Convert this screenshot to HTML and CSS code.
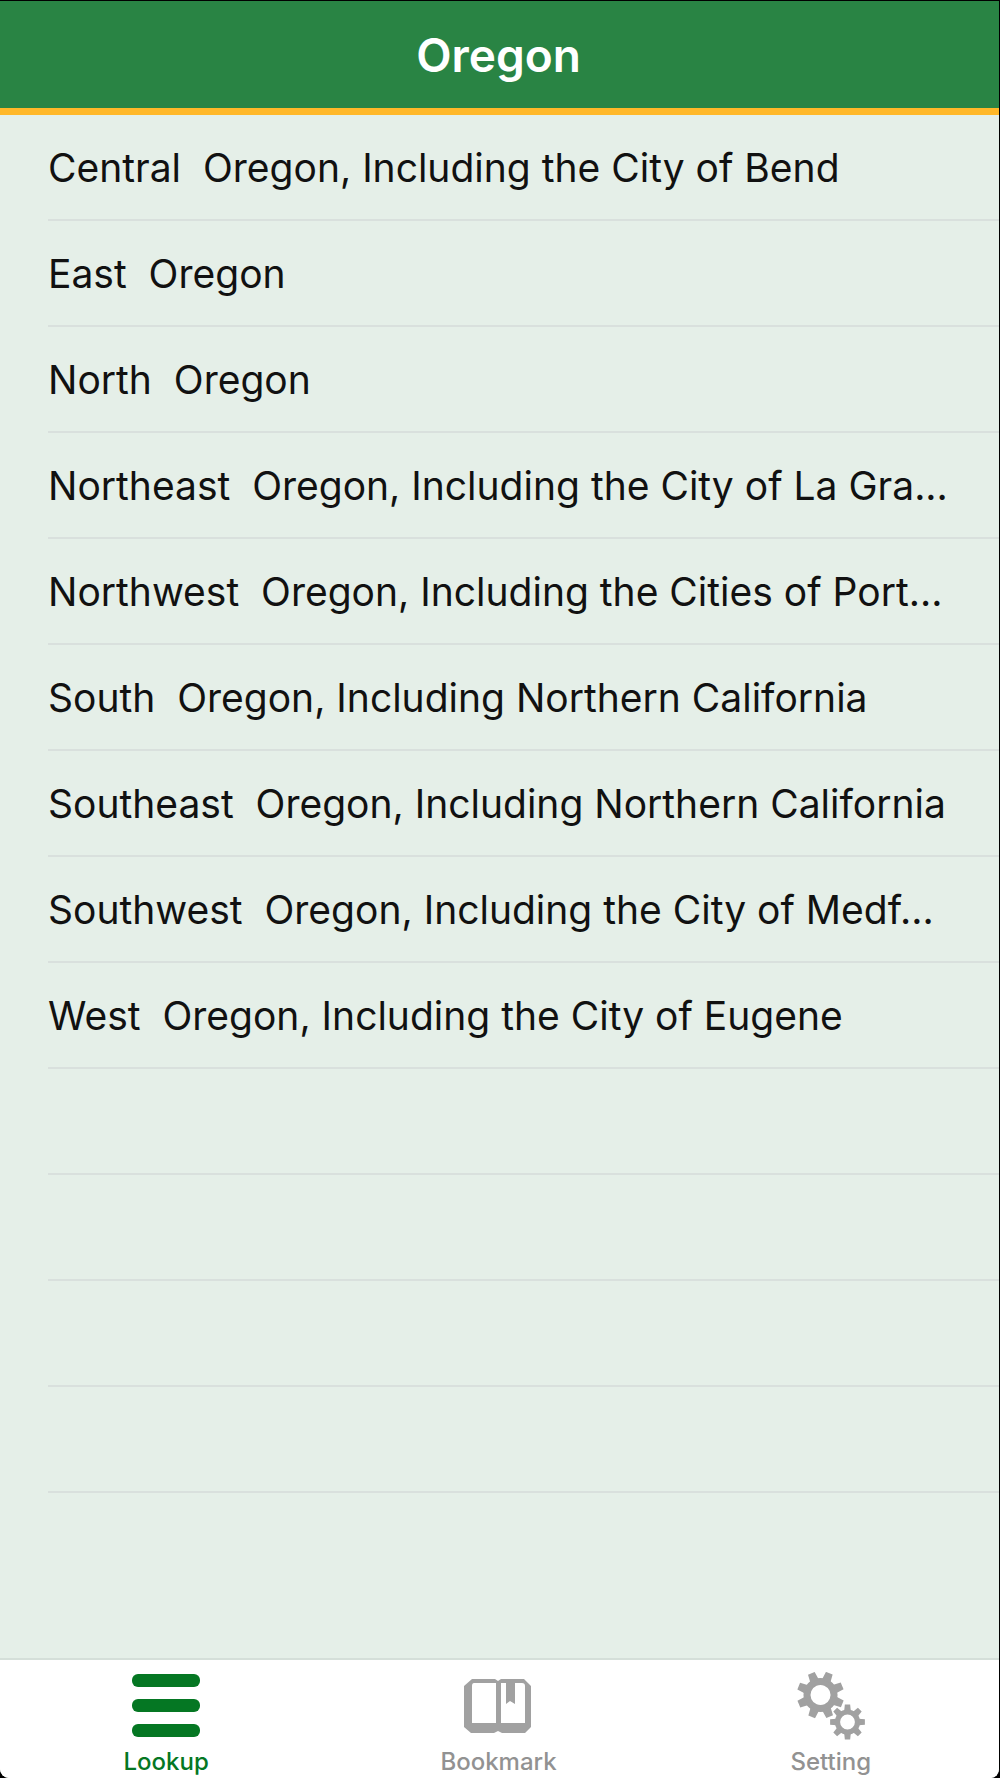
FILE: index.html
```html
<!DOCTYPE html>
<html lang="en">
<head>
  <meta charset="UTF-8" />
  <meta name="viewport" content="width=device-width, initial-scale=1.0" />
  <title>Oregon</title>
  <link rel="stylesheet" href="styles.css">
</head>
<body>
  <div class="app">
    <header class="header">
      <h1>Oregon</h1>
    </header>

    <main>
      <ul class="region-list">
        <li><a href="#central">Central  Oregon, Including the City of Bend</a></li>
        <li><a href="#east">East  Oregon</a></li>
        <li><a href="#north">North  Oregon</a></li>
        <li><a href="#northeast">Northeast  Oregon, Including the City of La Gra...</a></li>
        <li><a href="#northwest">Northwest  Oregon, Including the Cities of Port...</a></li>
        <li><a href="#south">South  Oregon, Including Northern California</a></li>
        <li><a href="#southeast">Southeast  Oregon, Including Northern California</a></li>
        <li><a href="#southwest">Southwest  Oregon, Including the City of Medf...</a></li>
        <li><a href="#west">West  Oregon, Including the City of Eugene</a></li>
        <!-- Empty rows -->
        <li></li>
        <li></li>
        <li></li>
        <li></li>
      </ul>
    </main>

    <nav class="tab-bar">
      <a class="tab active" href="#lookup">
        <svg viewBox="0 0 68 68" fill="currentColor" aria-hidden="true">
          <rect x="0" y="2" width="68" height="13" rx="6" />
          <rect x="0" y="27" width="68" height="13" rx="6" />
          <rect x="0" y="52" width="68" height="13" rx="6" />
        </svg>
        <span>Lookup</span>
      </a>
      <a class="tab" href="#bookmark">
        <svg viewBox="0 0 68 68" fill="currentColor" aria-hidden="true">
          <path fill-rule="evenodd" d="M8 7H31L34 9L37 7H60L67 14V55L61 61H38L34 59L30 61H7L0 55V14ZM10 11Q8 11 8 14V51H32V11ZM37 11V51H61V14Q61 11 58 11H51V32L46 29L42 32V11Z" />
        </svg>
        <span>Bookmark</span>
      </a>
      <a class="tab" href="#setting">
        <svg viewBox="0 0 68 68" fill="currentColor" aria-hidden="true">
          <defs>
            <g id="gear">
              <circle r="13.5" fill="none" stroke="currentColor" stroke-width="7" />
              <path id="teeth" d="M-4.5 -15L-3.6 -23.5H3.6L4.5 -15ZM-4.5 15L-3.6 23.5H3.6L4.5 15ZM-15 -4.5L-23.5 -3.6V3.6L-15 4.5ZM15 -4.5L23.5 -3.6V3.6L15 4.5Z" />
              <use href="#teeth" transform="rotate(45)" />
            </g>
          </defs>
          <use href="#gear" transform="translate(23.5 23) rotate(22)" />
          <use href="#gear" transform="translate(50.5 50) scale(.74)" />
        </svg>
        <span>Setting</span>
      </a>
    </nav>
  </div>
</body>
</html>
```
FILE: styles.css
```css
* {
  margin: 0;
  padding: 0;
  box-sizing: border-box;
}
body {
  font-family: Inter, "Liberation Sans", sans-serif;
  background: #000;
  color: #111;
}
.app {
  display: flex;
  flex-direction: column;
  min-height: 100vh;
  background: #e5efe8;
  border-top: 1px solid #000;
  border-right: 1px solid #000;
  border-radius: 0 0 9px 9px;
  overflow: hidden;
}
a {
  color: inherit;
  text-decoration: none;
}

/* Header */
.header {
  display: flex;
  justify-content: center;
  align-items: center;
  height: 114px;
  padding-right: 2px;
  background: #298444;
  border-bottom: 7px solid #ffb829;
}
.header h1 {
  font-size: 46px;
  font-weight: 600;
  line-height: 56px;
  color: #fff;
}

/* Region list */
main {
  flex: 1;
}
.region-list {
  list-style: none;
  padding-left: 48px;
}
.region-list li {
  height: 106px;
  border-bottom: 2px solid #d9e0dd;
}
.region-list a {
  display: flex;
  align-items: center;
  height: 100%;
  font-size: 39px;
  white-space: pre;
}

/* Tab bar */
.tab-bar {
  display: flex;
  height: 120px;
  padding-right: 2px;
  background: #fff;
  border-top: 2px solid #d5dfd9;
}
.tab {
  flex: 1;
  display: flex;
  flex-direction: column;
  align-items: center;
  gap: 8px;
  padding-top: 12px;
  color: #a1a1a1;
  font-size: 24px;
  font-weight: 500;
  line-height: 28px;
}
.tab svg {
  width: 68px;
  height: 68px;
}
.tab span {
  color: #929292;
}
.tab.active,
.tab.active span {
  color: #057723;
}
```
